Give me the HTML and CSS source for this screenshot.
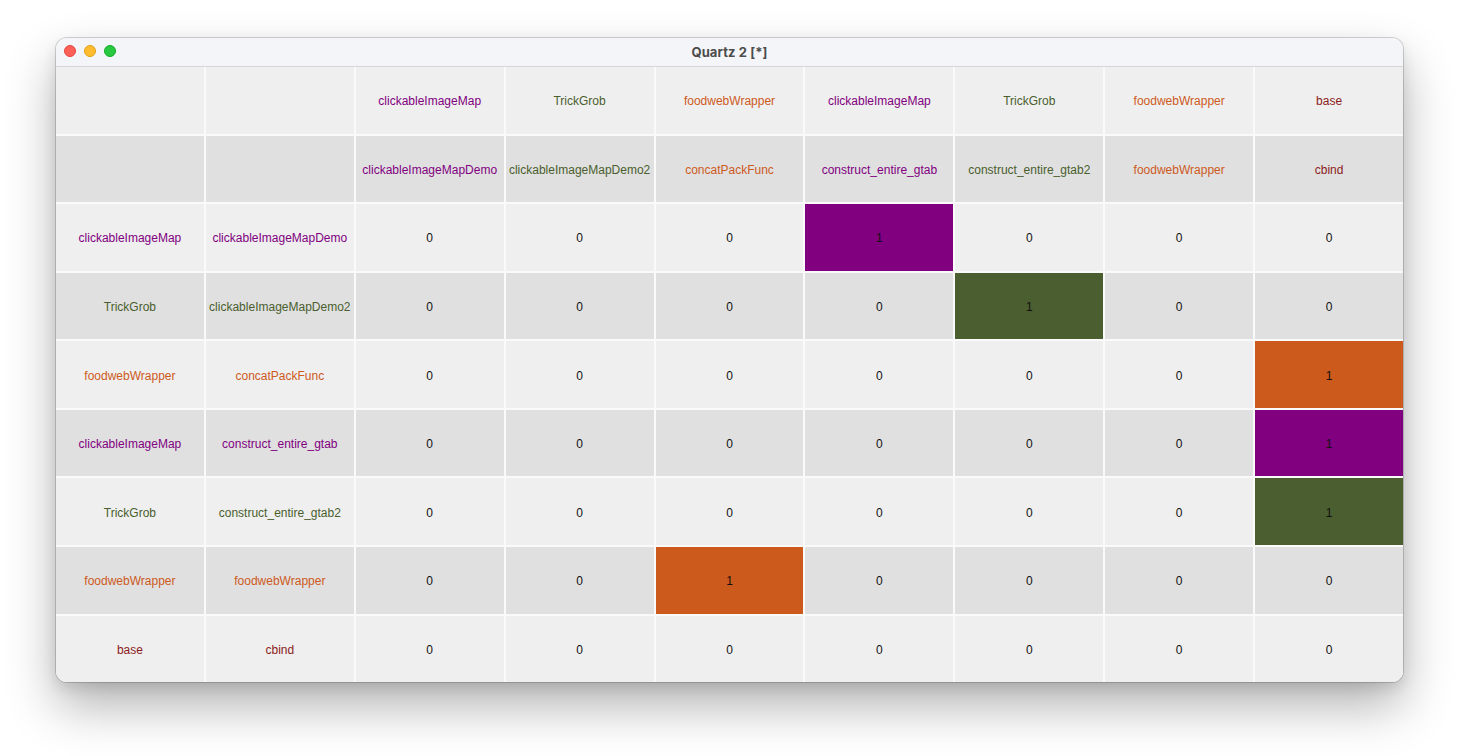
FILE: index.html
```html
<!DOCTYPE html>
<html>
<head>
<meta charset="utf-8">
<link rel="stylesheet" href="styles.css">
<title>Quartz 2 [*]</title>
</head>
<body>
<div class="window">
  <div class="titlebar">
    <div class="lights">
      <span class="dot dot-red"></span>
      <span class="dot dot-yellow"></span>
      <span class="dot dot-green"></span>
    </div>
    <div class="title">Quartz 2 [*]</div>
  </div>
  <div class="table">
    <div class="row row-l">
      <div class="c"></div><div class="c"></div>
      <div class="c p">clickableImageMap</div><div class="c g">TrickGrob</div><div class="c o">foodwebWrapper</div><div class="c p">clickableImageMap</div><div class="c g">TrickGrob</div><div class="c o">foodwebWrapper</div><div class="c b">base</div>
    </div>
    <div class="row row-d">
      <div class="c"></div><div class="c"></div>
      <div class="c p">clickableImageMapDemo</div><div class="c g">clickableImageMapDemo2</div><div class="c o">concatPackFunc</div><div class="c p">construct_entire_gtab</div><div class="c g">construct_entire_gtab2</div><div class="c o">foodwebWrapper</div><div class="c b">cbind</div>
    </div>
    <div class="row row-l">
      <div class="c p">clickableImageMap</div><div class="c p">clickableImageMapDemo</div>
      <div class="c n">0</div><div class="c n">0</div><div class="c n">0</div><div class="c n fp">1</div><div class="c n">0</div><div class="c n">0</div><div class="c n">0</div>
    </div>
    <div class="row row-d">
      <div class="c g">TrickGrob</div><div class="c g">clickableImageMapDemo2</div>
      <div class="c n">0</div><div class="c n">0</div><div class="c n">0</div><div class="c n">0</div><div class="c n fg">1</div><div class="c n">0</div><div class="c n">0</div>
    </div>
    <div class="row row-l">
      <div class="c o">foodwebWrapper</div><div class="c o">concatPackFunc</div>
      <div class="c n">0</div><div class="c n">0</div><div class="c n">0</div><div class="c n">0</div><div class="c n">0</div><div class="c n">0</div><div class="c n fo">1</div>
    </div>
    <div class="row row-d">
      <div class="c p">clickableImageMap</div><div class="c p">construct_entire_gtab</div>
      <div class="c n">0</div><div class="c n">0</div><div class="c n">0</div><div class="c n">0</div><div class="c n">0</div><div class="c n">0</div><div class="c n fp">1</div>
    </div>
    <div class="row row-l">
      <div class="c g">TrickGrob</div><div class="c g">construct_entire_gtab2</div>
      <div class="c n">0</div><div class="c n">0</div><div class="c n">0</div><div class="c n">0</div><div class="c n">0</div><div class="c n">0</div><div class="c n fg">1</div>
    </div>
    <div class="row row-d">
      <div class="c o">foodwebWrapper</div><div class="c o">foodwebWrapper</div>
      <div class="c n">0</div><div class="c n">0</div><div class="c n fo">1</div><div class="c n">0</div><div class="c n">0</div><div class="c n">0</div><div class="c n">0</div>
    </div>
    <div class="row row-l">
      <div class="c b">base</div><div class="c b">cbind</div>
      <div class="c n">0</div><div class="c n">0</div><div class="c n">0</div><div class="c n">0</div><div class="c n">0</div><div class="c n">0</div><div class="c n">0</div>
    </div>
  </div>
</div>
</body>
</html>
```
FILE: styles.css
```css
html, body {
  margin: 0;
  padding: 0;
  background: #ffffff;
}
body {
  box-sizing: border-box;
  min-height: 756px;
  padding: 38px 56px 0 56px;
  font-family: "Liberation Sans", Arial, sans-serif;
}
.window {
  width: 1347px;
  height: 644px;
  border-radius: 11px;
  overflow: hidden;
  background: #efefef;
  box-shadow: 0 0 0 1px rgba(0,0,0,0.16), 0 24px 50px rgba(0,0,0,0.30), 0 6px 14px rgba(0,0,0,0.10);
  display: flex;
  flex-direction: column;
}
.titlebar {
  height: 28px;
  flex: 0 0 28px;
  background: #f4f5f8;
  border-bottom: 1px solid #d6d6d8;
  position: relative;
  display: flex;
  align-items: center;
  justify-content: center;
}
.lights {
  position: absolute;
  left: 8px;
  top: 7px;
  display: flex;
  gap: 8px;
}
.dot {
  width: 12px;
  height: 12px;
  border-radius: 50%;
  box-sizing: border-box;
}
.dot-red { background: #fe5f57; border: 0.5px solid #e2463f; }
.dot-yellow { background: #febc2e; border: 0.5px solid #e1a116; }
.dot-green { background: #28c840; border: 0.5px solid #12ac28; }
.title {
  font-family: "Inter", "Liberation Sans", sans-serif;
  font-weight: 700;
  font-size: 13px;
  color: #4c4c4c;
  letter-spacing: 0.1px;
}
.table {
  flex: 1;
  display: flex;
  flex-direction: column;
  gap: 2px;
  background: #fafafa;
}
.row {
  flex: 1;
  display: grid;
  grid-template-columns: repeat(9, 1fr);
  gap: 2px;
}
.c {
  display: flex;
  align-items: center;
  justify-content: center;
  padding-top: 2px;
  font-size: 12px;
  white-space: nowrap;
  overflow: hidden;
}
.row-l .c { background: #efefef; }
.row-d .c { background: #e0e0e0; }
.n { color: #111111; }
.p { color: #800080; }
.g { color: #4a5e2e; }
.o { color: #cd5a1d; }
.b { color: #8b1c1c; }
.row .fp { background: #800080; }
.row .fg { background: #4a5e2f; }
.row .fo { background: #cd5a1d; }
```
